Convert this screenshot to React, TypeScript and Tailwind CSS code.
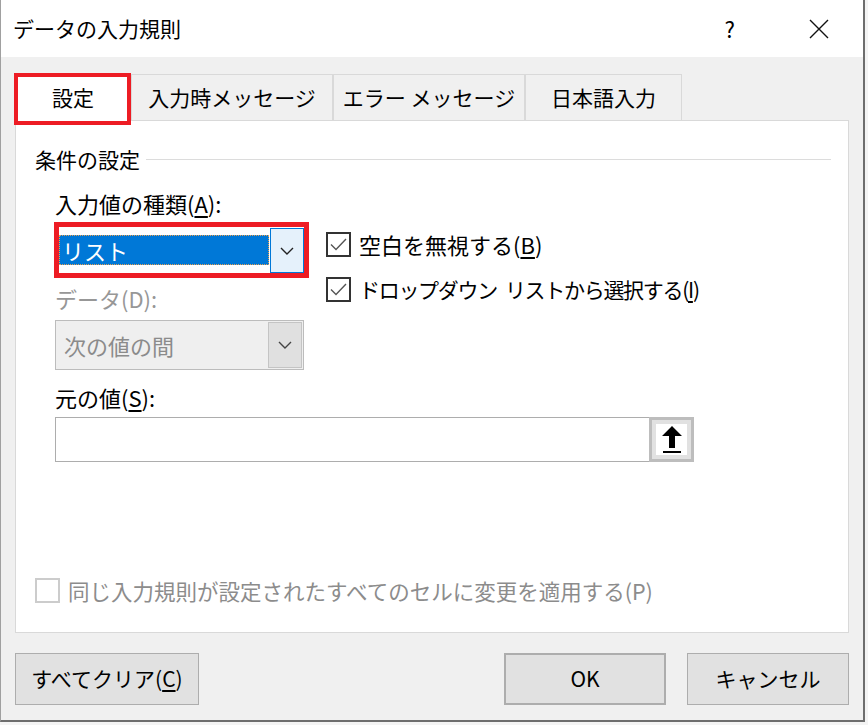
import type { ReactNode } from 'react'

const font = { fontFamily: '"Noto Sans CJK JP", "Noto Sans", sans-serif' }

function Chevron({ color = '#222' }: { color?: string }) {
  return (
    <svg width="14" height="8" viewBox="0 0 14 8" fill="none">
      <path d="M1 1l6 6 6-6" stroke={color} strokeWidth="1.4" />
    </svg>
  )
}

function Check({ checked, disabled }: { checked?: boolean; disabled?: boolean }) {
  return (
    <div
      className={
        'flex h-[25px] w-[25px] shrink-0 items-center justify-center border-2 bg-white ' +
        (disabled ? 'border-[#cccccc]' : 'border-[#333333]')
      }
    >
      {checked && (
        <svg width="17" height="13" viewBox="0 0 17 13" fill="none">
          <path d="M1 6.5l5 5L16 1" stroke="#555" strokeWidth="1.4" />
        </svg>
      )}
    </div>
  )
}

function Tab({ children, active }: { children: ReactNode; active?: boolean }) {
  return (
    <div
      className={
        'flex h-[46px] items-center justify-center border border-b-0 border-[#d9d9d9] text-[21px] text-black ' +
        (active ? 'relative z-10 -mb-px h-[47px] w-[116px] bg-white' : 'bg-[#f0f0f0]')
      }
    >
      {children}
    </div>
  )
}

function Boton({ children, className = '' }: { children: ReactNode; className?: string }) {
  return (
    <div
      className={
        'flex h-[52px] items-center justify-center border border-[#adadad] bg-[#e1e1e1] text-[21px] text-black ' +
        className
      }
    >
      {children}
    </div>
  )
}

export default function App() {
  return (
    <div className="h-[725px] w-[868px] overflow-hidden bg-[#f4f4f4]" style={font}>
      <div className="flex h-[722px] w-[865px] flex-col border-b-2 border-l border-r-2 border-[#6e6e6e] border-l-[#a0a0a0]">
        {/* barra de título */}
        <div className="flex h-[57px] shrink-0 items-center bg-white pl-[12px]">
          <span className="text-[21px] text-black">データの入力規則</span>
          <span className="ml-auto mr-[74px] text-[22px] text-black">?</span>
          <svg className="mr-[34px]" width="20" height="20" viewBox="0 0 20 20" fill="none">
            <path d="M1 1l18 18M19 1L1 19" stroke="#111" strokeWidth="1.4" />
          </svg>
        </div>

        <div className="flex flex-1 flex-col bg-[#f0f0f0] px-[14px] pt-[17px]">
          {/* pestañas */}
          <div className="flex items-end">
            <div className="relative">
              <Tab active>設定</Tab>
              <div className="absolute -left-[1px] -top-[1px] z-20 h-[52px] w-[117px] border-[4px] border-[#ed1c24]" />
            </div>
            <div className="w-[202px]"><Tab>入力時メッセージ</Tab></div>
            <div className="w-[192px]"><Tab>エラー メッセージ</Tab></div>
            <div className="w-[157px]"><Tab>日本語入力</Tab></div>
          </div>

          {/* panel */}
          <div className="flex h-[513px] flex-col border border-[#d9d9d9] bg-white pl-[19px] pr-[17px] text-[22px]">
            <div className="mt-[24px] flex items-center gap-[6px]">
              <span className="text-[21px] leading-[28px] text-black">条件の設定</span>
              <div className="h-px flex-1 bg-[#dcdcdc]" />
            </div>

            <div className="pl-[20px]">
              <div className="mt-[16px] leading-[28px] text-black">
                入力値の種類(<span className="underline decoration-2 underline-offset-[3px]">A</span>):
              </div>

              <div className="mt-[5px] flex items-start">
                <div className="w-[254px] shrink-0">
                  <div className="flex h-[56px] items-center border-[5px] border-[#ed1c24] bg-white -ml-[1px]">
                    <div className="flex h-[30px] flex-1 items-center border border-dotted border-[#e8a050] bg-[#0078d7] pl-[2px] text-white">
                      リスト
                    </div>
                    <div className="ml-[1px] flex h-[45px] w-[34px] items-center justify-center self-start mt-[1px] border border-[#0078d7] bg-[#e5f1fb]">
                      <Chevron />
                    </div>
                  </div>

                  <div className="mt-[6px] leading-[28px] text-[#979797]">データ(D):</div>
                  <div className="mt-[8px] flex h-[50px] w-[249px] items-center border border-[#bcbcbc] bg-[#efefef]">
                    <span className="flex-1 pl-[8px] text-[#8b8b8b]">次の値の間</span>
                    <div className="mr-px flex h-[46px] w-[34px] items-center justify-center border border-[#c4c4c4] bg-[#e0e0e0]">
                      <Chevron color="#444" />
                    </div>
                  </div>
                </div>

                <div className="ml-[17px] mt-[10px] flex flex-col gap-[20px] text-black">
                  <div className="flex items-center gap-[8px] leading-[25px]">
                    <Check checked />
                    <span>
                      空白を無視する(<span className="underline decoration-2 underline-offset-[3px]">B</span>)
                    </span>
                  </div>
                  <div className="flex items-center gap-[8px] leading-[25px]">
                    <Check checked />
                    <span className="whitespace-nowrap text-[21px] tracking-[-1.3px]">
                      ドロップダウン<span className="inline-block w-[8px]" />リストから選択する(
                      <span className="underline decoration-2 underline-offset-[3px]">I</span>)
                    </span>
                  </div>
                </div>
              </div>

              <div className="mt-[13px] leading-[28px] text-black">
                元の値(<span className="underline decoration-2 underline-offset-[3px]">S</span>):
              </div>
              <div className="mt-[6px] flex h-[45px] w-[639px] border border-[#adadad] bg-white">
                <div className="flex-1" />
                <div className="flex w-[45px] items-center justify-center border-[3px] border-[#bdbdbd] bg-[#e1e1e1] -m-px">
                  <div className="flex h-[31px] w-[31px] items-center justify-center bg-white">
                    <svg width="22" height="29" viewBox="0 0 22 29">
                      <path d="M11 1L1 11h7v12h6V11h7z" fill="#000" />
                      <rect x="2" y="26" width="18" height="2" fill="#000" />
                    </svg>
                  </div>
                </div>
              </div>
            </div>

            <div className="mt-auto mb-[25px] flex items-center gap-[8px]">
              <Check disabled />
              <span className="text-[21.5px] text-[#8c8c8c]">同じ入力規則が設定されたすべてのセルに変更を適用する(P)</span>
            </div>
          </div>

          {/* botones */}
          <div className="mt-[20px] flex">
            <Boton className="w-[184px]">
              すべてクリア(<span className="underline decoration-2 underline-offset-[3px]">C</span>)
            </Boton>
            <Boton className="ml-auto w-[162px] border-2 border-[#0078d7]">OK</Boton>
            <Boton className="ml-[21px] w-[162px]">キャンセル</Boton>
          </div>
        </div>
      </div>
    </div>
  )
}
